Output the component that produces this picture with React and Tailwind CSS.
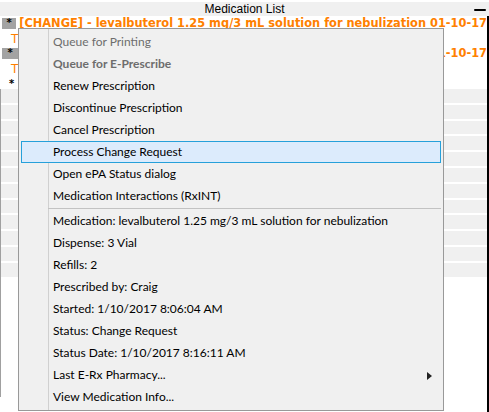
import React from "react";

const medLine = "[CHANGE] - levalbuterol 1.25 mg/3 mL solution for nebulization 01-10-17";

const topItems = [
  { label: "Queue for Printing", disabled: true },
  { label: "Queue for E-Prescribe", disabled: true, bold: true },
  { label: "Renew Prescription" },
  { label: "Discontinue Prescription" },
  { label: "Cancel Prescription" },
  { label: "Process Change Request", active: true },
  { label: "Open ePA Status dialog" },
  { label: "Medication Interactions (RxINT)" },
];

const infoItems = [
  { label: "Medication: levalbuterol 1.25 mg/3 mL solution for nebulization" },
  { label: "Dispense: 3 Vial" },
  { label: "Refills: 2" },
  { label: "Prescribed by: Craig" },
  { label: "Started: 1/10/2017 8:06:04 AM" },
  { label: "Status: Change Request" },
  { label: "Status Date: 1/10/2017 8:16:11 AM" },
  { label: "Last E-Rx Pharmacy...", submenu: true },
  { label: "View Medication Info..." },
];

function StarBox() {
  return (
    <div className="w-[16px] h-[11px] bg-[#a3a3a3] flex justify-center text-[10px] leading-[9px] font-bold text-black">
      *
    </div>
  );
}

function MenuItem({ item }) {
  const color = item.disabled ? "text-[#6d6d6d]" : "text-black";
  const weight = item.bold ? "font-bold" : "font-normal";
  const box = item.active
    ? "bg-[#dcebfc] border border-[#26a0da]"
    : "border border-transparent";
  return (
    <div className={`relative h-[22px] flex items-center pl-[31px] ${box}`}>
      <span className={`${color} ${weight} whitespace-nowrap`}>{item.label}</span>
      {item.submenu && (
        <svg className="absolute left-[405px] top-[7px]" width="5" height="8" viewBox="0 0 5 8">
          <path d="M0 0 L5 4 L0 8 Z" fill="#222" />
        </svg>
      )}
    </div>
  );
}

export default function App() {
  return (
    <div className="relative w-[489px] h-[412px] bg-white overflow-hidden" style={{ fontFamily: "'Liberation Sans', Arial, sans-serif" }}>
      <div className="h-[2px]" />
      <div className="relative h-[14px] bg-[#f0f0f0] flex items-center justify-center text-[12px] text-black leading-none">
        Medication List
        <div className="absolute right-[3px] top-[7px] w-[12px] h-[2px] rounded-full bg-black" />
      </div>

      <div className="border-r-[2px] border-black h-[396px]">
        <div
          className="text-[11.4px] font-bold text-[#ff8000]"
          style={{ fontFamily: "'DejaVu Sans', Verdana, sans-serif" }}
        >
          <div className="h-[15px] flex items-center pl-[2px] gap-[3px] whitespace-nowrap overflow-hidden">
            <StarBox />
            <span>{medLine}</span>
          </div>
          <div className="h-[15px] flex items-center pl-[11px] font-normal text-[12px]">T</div>
          <div className="h-[15px] flex items-center pl-[2px] gap-[3px] whitespace-nowrap overflow-hidden">
            <StarBox />
            <span className="flex-1 text-right">01-10-17</span>
          </div>
          <div className="h-[15px] flex items-center pl-[11px] font-normal text-[12px]">T</div>
          <div className="h-[13px] flex items-center pl-[6px]">
            <div className="w-[11px] h-[6px] bg-white flex justify-center text-[10px] leading-[7px] text-black">*</div>
          </div>
        </div>

        <div className="border-l border-[#a0a0a0] h-[308px] flex flex-col gap-[2px]">
          {Array.from({ length: 12 }).map((_, i) => (
            <div key={i} className="h-[13.8px] bg-[#f0f0f0]" />
          ))}
        </div>
      </div>

      <div
        className="absolute left-[18px] top-[28px] w-[426px] h-[383px] border border-[#999] bg-[#f0f0f0] p-[2px] text-[12px]"
        style={{ fontFamily: "Lato, 'Noto Sans', sans-serif" }}
      >
        <div className="absolute left-[29px] top-0 bottom-0 w-px bg-[#d0d0d0]" />
        <div className="relative">
          {topItems.map((it) => (
            <MenuItem key={it.label} item={it} />
          ))}
          <div className="h-[3px] pl-[27px] pt-[1px]">
            <div className="h-px bg-[#c2c2c2]" />
          </div>
          {infoItems.map((it) => (
            <MenuItem key={it.label} item={it} />
          ))}
        </div>
      </div>
    </div>
  );
}
